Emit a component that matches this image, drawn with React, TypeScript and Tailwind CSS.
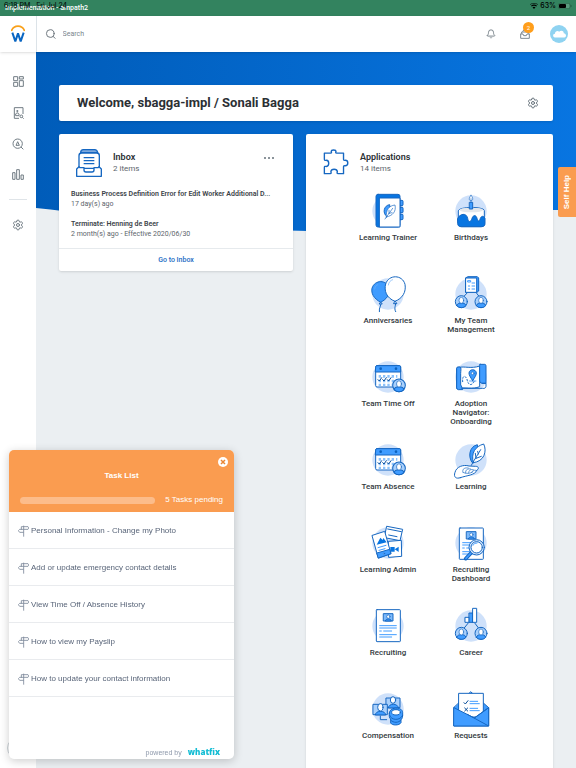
import type { ReactNode } from "react";
import { Search, Bell, Settings, ChevronRight } from "lucide-react";

const LINE = "#1667c1";
const FILL = "#409cff";
const PALE = "#cfe1fa";

function Art({ children, disc = true }: { children: ReactNode; disc?: boolean }) {
  return (
    <svg
      viewBox="0 0 108 108"
      className="size-9 shrink-0 overflow-visible"
      fill="white"
      stroke={LINE}
      strokeWidth="3"
      strokeLinejoin="round"
      strokeLinecap="round"
      aria-hidden="true"
    >
      {disc && <circle cx="54" cy="54" r="47" fill={PALE} stroke="none" />}
      {children}
    </svg>
  );
}

function Person({ x, y, r = 18 }: { x: number; y: number; r?: number }) {
  return (
    <g transform={`translate(${x} ${y}) scale(${r / 18})`}>
      <circle r="18" fill="#a9d0fc" />
      <path d="M-14 12C-12 5-6 4 0 4S12 5 14 12C7 20-7 20-14 12Z" fill={FILL} />
      <ellipse cy="-4" rx="7" ry="9" strokeWidth="2" />
    </g>
  );
}

function Portrait({ x, y }: { x: number; y: number }) {
  return (
    <g transform={`translate(${x} ${y})`}>
      <rect width="28" height="22" fill="#7dbafc" />
      <path d="M5 21C6 14 22 14 23 21Z" fill={FILL} />
      <circle cx="14" cy="9" r="5" strokeWidth="2" />
    </g>
  );
}

function NotebookArt() {
  return (
    <Art>
      <rect x="86" y="22" width="13" height="16" rx="3" fill={FILL} />
      <rect x="86" y="43" width="13" height="16" rx="3" fill={FILL} />
      <rect x="86" y="64" width="13" height="16" rx="3" fill={FILL} />
      <rect x="18" y="4" width="72" height="98" rx="6" fill="#0875e1" />
      <path d="M29 15H90V102H29Z" />
      <path d="M50 70C36 60 42 37 59 35L61 57Z" fill={FILL} />
      <path d="M49 72C47 51 57 38 75 36C79 55 69 68 49 72ZM45 78L68 46M57 61V52M57 61L66 59" strokeWidth="2" />
    </Art>
  );
}

function CakeArt() {
  return (
    <Art>
      <path d="M16 53C16 40 94 40 94 53V91C94 97 90 101 84 101H26C20 101 16 97 16 91Z" />
      <ellipse cx="55" cy="51" rx="35" ry="7" fill="#e4e7eb" stroke="none" />
      <path d="M14 76C21 62 40 58 44 76C46 89 53 89 57 76C61 65 69 65 72 76C76 90 80 83 82 76C85 69 91 67 96 76V92C96 98 92 101 86 101H24C18 101 14 98 14 92Z" fill="#0875e1" />
      <rect x="50" y="28" width="9" height="20" fill={FILL} />
      <path d="M54 7C62 15 60 23 54 23S46 16 54 7ZM54 17V27" strokeWidth="2" />
    </Art>
  );
}

function BalloonsArt() {
  return (
    <Art>
      <path d="M32 80C35 91 26 94 28 107M76 76C80 88 70 94 77 107" fill="none" />
      <path d="M32 79C10 67 3 51 6 37C14 10 51 10 58 38C61 56 48 71 32 79Z" fill={FILL} />
      <path d="M28 83L32 78L36 83Z" />
      <path d="M75 76C48 66 42 43 47 24C56-5 97-5 105 25C109 48 98 67 75 76Z" />
      <path d="M71 82L75 75L80 82Z" />
      <path d="M55 27C56 19 61 13 68 11M14 39C15 32 18 28 23 26" fill="none" strokeWidth="2" stroke="#70b0f8" />
    </Art>
  );
}

function TeamArt() {
  return (
    <Art>
      <path d="M45 48L33 61M68 48L78 61" fill="none" />
      <path d="M39 5L45 2H73L77 6V45L72 49H39Z" fill={FILL} />
      <rect x="39" y="6" width="32" height="43" />
      <path d="M45 14H53V18H45ZM46 30H50M46 39H50M57 21H65M57 30H65M57 39H65" stroke={FILL} />
      <Person x={25} y={77} />
      <Person x={84} y={77} />
    </Art>
  );
}

function CalendarArt() {
  return (
    <Art>
      <rect x="17" y="20" width="75" height="64" rx="4" />
      <path d="M17 24C17 21 19 20 21 20H88C91 20 92 22 92 24V39H17Z" fill={FILL} />
      <circle cx="32" cy="29" r="4" fill="#0b62bf" stroke="none" />
      <circle cx="78" cy="29" r="4" fill="#0b62bf" stroke="none" />
      <path d="M26 52H82M26 66H82M26 78H66" strokeWidth="8" strokeDasharray="7 6" strokeLinecap="butt" stroke="#8cc2fb" fill="none" />
      <path d="M24 62L28 66L35 56M38 62L42 66L49 56M52 62L56 66L63 56" fill="none" stroke="#064c99" />
      <Person x={87} y={79} r={19} />
    </Art>
  );
}

function MapArt() {
  return (
    <Art>
      <path d="M18 25C34 21 55 30 80 21V83C58 92 38 84 11 88V30C11 27 14 24 18 25Z" />
      <path d="M14 24H21C26 25 23 36 23 43V78C27 82 26 87 29 92H16C9 91 11 83 11 75V29Z" fill={FILL} />
      <path d="M81 16H95C99 16 99 20 99 24V73H88C80 73 80 65 80 60V22C80 19 79 17 81 16Z" fill={FILL} />
      <path d="M88 73H99V82C99 87 94 89 89 88H27" fill="none" />
      <ellipse cx="59" cy="66" rx="12" ry="4" fill="#a9d0fc" stroke="none" />
      <path d="M59 65C51 53 48 48 48 42C49 29 69 29 70 42C70 49 66 54 59 65Z" fill={FILL} />
      <circle cx="59" cy="43" r="4" strokeWidth="2" />
      <path d="M29 68C27 48 38 49 42 61C46 80 56 82 64 66" fill="none" strokeDasharray="4 6" />
    </Art>
  );
}

function HandLeafArt() {
  return (
    <Art>
      <path d="M57 61C45 45 48 14 73 8L78 43Z" fill={FILL} />
      <path d="M61 62C53 33 67 13 92 6C103 28 93 59 61 62Z" />
      <path d="M55 70C66 49 76 36 83 23M69 48L67 34M69 49L85 43M76 36L74 28" fill="none" />
      <path d="M22 107C9 112 1 105 6 91C10 74 31 67 48 72L68 73C78 73 78 81 72 84C66 100 42 100 22 107Z" />
      <path d="M30 91C26 80 36 76 46 78M38 93C36 82 46 79 53 81M47 93C47 84 54 81 61 83M56 91C57 86 63 83 70 85M30 91C38 96 53 95 60 89" fill="none" strokeWidth="2" />
    </Art>
  );
}

function MediaArt() {
  return (
    <Art>
      <path d="M51 4L98 13L90 47L44 38Z" />
      <path d="M53 12L94 20M56 30L81 35" fill="none" strokeWidth="3" />
      <path d="M56 49L94 46L95 94L57 97Z" />
      <path d="M61 66H74V80H61ZM74 73L86 65V81Z" fill="#0875e1" stroke="none" />
      <path d="M7 31L44 19L63 86L26 99Z" />
      <path d="M21 84L59 73L63 86L26 99Z" fill={FILL} />
      <path d="M20 59L31 38L38 45L40 39L50 52Z" fill="#0875e1" stroke="none" />
      <path d="M24 68L48 61M27 76L45 71" fill="none" stroke={FILL} />
      <circle cx="42" cy="86" r="2" strokeWidth="2" />
    </Art>
  );
}

function ResumeArt({ lens = false }: { lens?: boolean }) {
  return (
    <Art>
      <rect x="19" y={lens ? 9 : 5} width="72" height={lens ? 94 : 96} rx="2" />
      <Portrait x={41} y={lens ? 20 : 17} />
      <path d="M29 53H79M29 60H79M29 69H34M41 69H65M29 80H79M29 87H65" fill="none" stroke={FILL} />
      {lens && (
        <>
          <path d="M54 84L38 101" fill="none" strokeWidth="11" />
          <path d="M54 84L39 100" fill="none" stroke={FILL} strokeWidth="5" />
          <circle cx="71" cy="67" r="23" fill="#d9eaff" />
          <circle cx="71" cy="67" r="17" />
          <path d="M60 61C62 56 67 54 72 54" fill="none" stroke={FILL} />
        </>
      )}
    </Art>
  );
}

function CareerArt() {
  return (
    <Art>
      <path d="M45 46L32 62M66 46L78 62" fill="none" />
      <path d="M37 28H49V43H37Z" />
      <path d="M49 15H60V43H49Z" fill={FILL} />
      <path d="M60 1H71V43H60Z" />
      <Person x={25} y={76} />
      <Person x={84} y={76} />
    </Art>
  );
}

function CompensationArt() {
  return (
    <Art>
      <path d="M49 21H90V50H49Z" fill="#a9d0fc" />
      <path d="M55 50C56 36 84 36 85 50Z" fill={FILL} />
      <ellipse cx="69" cy="27" rx="8" ry="10" />
      <path d="M10 40H52V71H10Z" fill="#a9d0fc" />
      <path d="M16 71C17 57 46 57 47 71Z" fill={FILL} />
      <ellipse cx="31" cy="49" rx="8" ry="11" />
      <path d="M31 75V86H50" fill="none" />
      <path d="M58 67C58 46 98 46 98 65C99 78 96 84 93 86V95C88 104 66 104 62 96V84C58 81 57 75 58 67Z" fill={FILL} />
      <ellipse cx="78" cy="64" rx="13" ry="8" />
      <path d="M59 73C63 89 91 90 98 73M62 87C70 97 86 96 93 87" fill="none" />
    </Art>
  );
}

function EnvelopeArt() {
  return (
    <Art disc={false}>
      <path d="M54 3L107 50V105H3V50Z" fill={FILL} />
      <path d="M18 7H91V78H18Z" />
      <path d="M33 35L37 39L45 29M35 51L44 60M44 51L35 60" fill="none" stroke="#064c99" />
      <path d="M51 31H74M51 38H79M51 52H74M51 59H79" fill="none" stroke={FILL} />
      <path d="M3 50L64 81L107 50V105H3Z" fill={FILL} />
      <path d="M43 70L105 104M64 81L107 50" fill="none" />
    </Art>
  );
}

const apps: { label: string; art: ReactNode }[] = [
  { label: "Learning Trainer", art: <NotebookArt /> },
  { label: "Birthdays", art: <CakeArt /> },
  { label: "Anniversaries", art: <BalloonsArt /> },
  { label: "My Team Management", art: <TeamArt /> },
  { label: "Team Time Off", art: <CalendarArt /> },
  { label: "Adoption Navigator: Onboarding", art: <MapArt /> },
  { label: "Team Absence", art: <CalendarArt /> },
  { label: "Learning", art: <HandLeafArt /> },
  { label: "Learning Admin", art: <MediaArt /> },
  { label: "Recruiting Dashboard", art: <ResumeArt lens /> },
  { label: "Recruiting", art: <ResumeArt /> },
  { label: "Career", art: <CareerArt /> },
  { label: "Compensation", art: <CompensationArt /> },
  { label: "Requests", art: <EnvelopeArt /> },
];

const tasks = [
  "Personal Information - Change my Photo",
  "Add or update emergency contact details",
  "View Time Off / Absence History",
  "How to view my Payslip",
  "How to update your contact information",
];

function StatusBar() {
  return (
    <div className="relative flex h-4 shrink-0 items-center justify-between bg-[#33835f] pr-1 pl-[5px]">
      <span className="text-[7px] leading-4 font-medium text-white">Implementation - ampath2</span>
      <div className="absolute top-0 left-1 flex gap-1.5 font-['Inter','Liberation_Sans',sans-serif] text-[7px] leading-3 text-black">
        <span>6:18 PM</span>
        <span>Fri Jul 24</span>
      </div>
      <div className="flex items-center gap-0.5 pb-1 font-['Inter','Liberation_Sans',sans-serif] text-[7px] leading-3 font-medium text-black">
        <svg viewBox="0 0 24 18" className="h-[6px] w-2" aria-hidden="true">
          <path d="M12 18L7.5 13C10 11 14 11 16.500 13ZM5 10.500C9 7 15 7 19 10.500L21 8C16 3.500 8 3.500 3 8ZM1 5.500L0 4C7-1.500 17-1.500 24 4L22.500 5.500C16 0 8 0 1 5.500Z" />
        </svg>
        <span>63%</span>
        <svg viewBox="0 0 42 18" className="h-[6px] w-3.5" aria-hidden="true">
          <rect x="1" y="1" width="35" height="16" rx="5" fill="#5b9c7f" stroke="#245e44" strokeWidth="2" />
          <rect x="3" y="3" width="21" height="12" rx="3" />
          <path d="M39 6V12" stroke="#245e44" strokeWidth="3" />
        </svg>
      </div>
    </div>
  );
}

function Header() {
  return (
    <header className="relative z-10 flex h-9 shrink-0 items-center bg-white shadow-sm">
      <a href="#home" aria-label="Home" className="flex h-full w-[37px] items-center justify-center border-r border-[#dce3e8]">
        <svg viewBox="0 0 42 54" className="h-[18px] w-3.5" fill="none" aria-hidden="true">
          <path d="M2 16C9-1 33-1 40 16" stroke="#f9a11b" strokeWidth="5" strokeLinecap="round" />
          <path d="M4 23L13 49L21 25L29 49L38 23" stroke="#0a66c2" strokeWidth="6" strokeLinejoin="bevel" />
        </svg>
      </a>
      <label className="flex flex-1 items-center gap-1.5 pl-2 text-[#6b747b]">
        <Search className="size-3" strokeWidth={2} />
        <input
          type="search"
          placeholder="Search"
          aria-label="Search"
          className="w-full bg-transparent text-[7px] leading-3 outline-none placeholder:text-[#7b858c] placeholder:opacity-100"
        />
      </label>
      <div className="flex items-center pr-2 text-[#65717a]">
        <button aria-label="Notifications" className="mr-6">
          <Bell className="size-[10px]" strokeWidth={2} />
        </button>
        <button aria-label="Inbox, 2 unread" className="relative mr-5">
          <svg viewBox="0 0 30 30" className="size-[10px]" fill="none" stroke="currentColor" strokeWidth="2.500" aria-hidden="true">
            <path d="M2 14V28H28V14M2 15H9L11 20H19L21 15H28M5 14V9H25V14M8 8L11 3H19L22 8" />
          </svg>
          <span className="absolute -top-[7px] left-[3px] flex size-[11px] items-center justify-center rounded-full bg-[#ff9e1b] text-[6px] leading-none text-white">
            2
          </span>
        </button>
        <button aria-label="Profile" className="flex size-[18px] items-center justify-center rounded-full bg-[#8fd3f1]">
          <svg viewBox="0 0 40 24" className="h-2 w-[13px]" fill="white" aria-hidden="true">
            <path d="M6 23C-2 21-1 11 6 11C6 3 15 1 19 5C24-1 34 2 33 10C42 11 42 22 35 23Z" />
          </svg>
        </button>
      </div>
    </header>
  );
}

function Sidebar() {
  return (
    <nav aria-label="Main" className="flex w-9 shrink-0 flex-col items-center bg-white pt-6 pb-[9px] text-[#717c84]">
      <button aria-label="Dashboard">
        <svg viewBox="0 0 33 33" className="size-[11px]" fill="none" stroke="currentColor" strokeWidth="3" aria-hidden="true">
          <path d="M2 2H14V14H2ZM19 2H31V9H19ZM19 14H31V31H19ZM2 19H14V31H2Z" />
        </svg>
      </button>
      <button aria-label="Directory" className="mt-5">
        <svg viewBox="0 0 33 36" className="h-3 w-[11px]" fill="none" stroke="currentColor" strokeWidth="3" aria-hidden="true">
          <path d="M18 34H4V2H30V21M8 26V21C9 17 17 17 18 21V26ZM13 9V16M10 12H16" />
          <circle cx="25" cy="28" r="4" />
          <path d="M28 31L32 35" />
        </svg>
      </button>
      <button aria-label="Find people" className="mt-[19px]">
        <svg viewBox="0 0 36 36" className="size-3" fill="none" stroke="currentColor" strokeWidth="3" aria-hidden="true">
          <circle cx="17" cy="17" r="14" />
          <path d="M27 27L34 34M12 22L17 11L22 22Z" />
        </svg>
      </button>
      <button aria-label="Reports" className="mt-[19px]">
        <svg viewBox="0 0 36 33" className="h-[11px] w-3" fill="none" stroke="currentColor" strokeWidth="3" aria-hidden="true">
          <path d="M2 11H9V31H2ZM14 2H22V31H14ZM27 18H34V31H27Z" />
        </svg>
      </button>
      <hr className="mt-[19px] w-[18px] border-[#dfe4e8]" />
      <button aria-label="Settings" className="mt-[19px]">
        <Settings className="size-3" strokeWidth={2} />
      </button>
      <button aria-label="Expand menu" className="mt-auto flex size-[22px] items-center justify-center rounded-full border border-[#ccd3d8]">
        <ChevronRight className="size-[10px]" />
      </button>
    </nav>
  );
}

function InboxCard() {
  return (
    <section aria-label="Inbox" className="flex-[234] self-start rounded-xs bg-white shadow-sm">
      <div className="flex items-start px-[17px] pt-[15px]">
        <svg viewBox="0 0 78 84" className="h-7 w-[26px] shrink-0" fill="white" stroke={LINE} strokeWidth="4" strokeLinejoin="round" aria-hidden="true">
          <path d="M14 11C14 4 17 2 22 2H56C61 2 64 5 65 11Z" fill="#7ea9dc" />
          <path d="M9 20C9 15 12 12 17 12H62C67 12 70 15 70 20V58H9Z" />
          <path d="M23 26H55M23 35H55M23 44H55" />
          <path d="M9 53L2 60V82H76V60L69 53L66 56H54V63C54 66 52 69 48 69H30C26 69 24 66 24 63V56H12Z" />
        </svg>
        <div className="ml-[11px] flex-1 pt-[3px]">
          <h2 className="text-[9px] leading-[11px] font-semibold text-[#2c3034]">Inbox</h2>
          <p className="text-[8px] leading-3 text-[#5c656b]">2 items</p>
        </div>
        <button aria-label="Inbox options" className="mt-2 mr-0.5 flex gap-0.5">
          <span className="size-[2px] rounded-full bg-[#657079]" />
          <span className="size-[2px] rounded-full bg-[#657079]" />
          <span className="size-[2px] rounded-full bg-[#657079]" />
        </button>
      </div>
      <ul className="flex flex-col gap-[10px] px-3 pt-3 pb-[9px] text-[7px] leading-[10px] text-[#5c656b]">
        <li>
          <p className="font-semibold whitespace-nowrap text-[#3c4349]">Business Process Definition Error for Edit Worker Additional D...</p>
          <p>17 day(s) ago</p>
        </li>
        <li>
          <p className="font-semibold text-[#3c4349]">Terminate: Henning de Beer</p>
          <p>2 month(s) ago - Effective 2020/06/30</p>
        </li>
      </ul>
      <a href="#inbox" className="block border-t border-[#e6eaed] text-center text-[7px] leading-[22px] font-medium text-[#1b6bc4]">
        Go to Inbox
      </a>
    </section>
  );
}

function ApplicationsCard() {
  return (
    <section aria-label="Applications" className="flex-[247] rounded-t-xs bg-white shadow-sm">
      <div className="flex items-start px-[17px] pt-[15px]">
        <svg viewBox="0 0 76 76" className="size-[26px] shrink-0" fill="none" stroke={LINE} strokeWidth="4" strokeLinejoin="round" aria-hidden="true">
          <path d="M4 12H22C27 12 24 9 24 8C24 1 38 1 38 8C38 9 35 12 40 12H60V30C60 34 63 33 65 33C75 33 75 49 65 49C63 49 60 48 60 52V72H44C39 72 42 68 42 66C41 57 24 57 23 66C23 68 26 72 21 72H4V54C4 49 8 51 10 51C19 50 19 34 10 33C8 33 4 35 4 30Z" />
        </svg>
        <div className="ml-[11px] flex-1 pt-[3px]">
          <h2 className="text-[9px] leading-[11px] font-semibold text-[#2c3034]">Applications</h2>
          <p className="text-[8px] leading-3 text-[#5c656b]">14 items</p>
        </div>
      </div>
      <div className="grid auto-rows-[83px] grid-cols-[83px_83px] justify-center pt-[18px]">
        {apps.map((app) => (
          <a key={app.label} href="#app" className="flex flex-col items-center gap-1 px-3 text-center text-[8px] leading-[9px] font-medium text-[#333a40]">
            {app.art}
            <span className={app.label.length > 16 ? "" : "whitespace-nowrap"}>{app.label}</span>
          </a>
        ))}
      </div>
    </section>
  );
}

function Signpost() {
  return (
    <svg viewBox="0 0 33 36" className="h-3 w-[11px] shrink-0" fill="none" stroke="#7b8799" strokeWidth="2.500" strokeLinejoin="round" aria-hidden="true">
      <path d="M17 2V35M10 14V5H30L33 9L30 13H17M17 13H5L1 17L5 22H17" />
    </svg>
  );
}

function TaskPanel() {
  return (
    <aside
      aria-label="Task List"
      className="fixed bottom-[9px] left-[9px] z-20 flex h-[309px] w-[225px] flex-col overflow-hidden rounded-[5px] bg-white font-['Liberation_Sans',Arial,sans-serif] text-[8px] shadow-[0_2px_10px_rgba(0,0,0,0.2)]"
    >
      <div className="relative shrink-0 bg-[#fa9c50] px-[11px] pt-5 pb-1.5 text-white">
        <button aria-label="Close" className="absolute top-[7px] right-[6px] flex size-[10px] items-center justify-center rounded-full bg-white">
          <svg viewBox="0 0 12 12" className="size-[6px]" stroke="#e98735" strokeWidth="3" aria-hidden="true">
            <path d="M2 2L10 10M10 2L2 10" />
          </svg>
        </button>
        <h2 className="text-center leading-3 font-bold">Task List</h2>
        <div className="mt-3 flex items-center justify-between leading-3">
          <div role="progressbar" aria-valuenow={0} aria-label="Tasks done" className="h-[7px] w-[135px] rounded-full bg-[#fcbc8a]" />
          <span>5 Tasks pending</span>
        </div>
      </div>
      <ul>
        {tasks.map((task) => (
          <li key={task} className="border-b border-[#e9ebee]">
            <a href="#task" className="flex h-9 items-center gap-0.5 pt-px pl-[9px] text-[#596579]">
              <Signpost />
              {task}
            </a>
          </li>
        ))}
      </ul>
      <p className="mt-auto flex items-baseline justify-end gap-1.5 pr-3.5 text-[7px] leading-3 text-[#8e99ab]">
        powered by
        <span className="font-['Open_Sans',sans-serif] text-[8px] font-extrabold text-[#14bdd4]">whatfix</span>
      </p>
    </aside>
  );
}

export default function App() {
  return (
    <div className="flex h-screen flex-col overflow-hidden bg-[#ebeff2] font-['Roboto','Liberation_Sans',sans-serif]">
      <StatusBar />
      <Header />
      <div className="flex min-h-0 flex-1">
        <Sidebar />
        <main className="relative flex min-w-0 flex-1 flex-col px-[23px] pt-[33px]">
          <svg viewBox="0 0 540 180" preserveAspectRatio="none" className="absolute top-0 left-0 h-[180px] w-full" aria-hidden="true">
            <defs>
              <linearGradient id="banner" x1="0" x2="1" y1="0" y2="0">
                <stop offset="0" stopColor="#005cb9" />
                <stop offset="1" stopColor="#0875e1" />
              </linearGradient>
            </defs>
            <path d="M0 0H540V158H515C440 168 390 179 290 179C180 179 100 167 0 156Z" fill="url(#banner)" />
          </svg>
          <div className="relative flex h-9 shrink-0 items-center justify-between rounded-xs bg-white pr-3.5 pl-[18px] shadow-sm">
            <h1 className="text-[13px] leading-4 font-bold text-[#2c3034]">Welcome, sbagga-impl / Sonali Bagga</h1>
            <button aria-label="Page settings" className="text-[#65717a]">
              <Settings className="size-3" strokeWidth={2} />
            </button>
          </div>
          <div className="relative mt-[13px] flex flex-1 gap-[13px]">
            <InboxCard />
            <ApplicationsCard />
          </div>
        </main>
      </div>
      <TaskPanel />
      <button className="fixed top-[167px] right-0 z-20 flex h-[50px] w-[18px] items-center justify-center rounded-l-xs bg-[#fa9c50] font-['Liberation_Sans',Arial,sans-serif] text-[8px] font-bold text-white">
        <span className="rotate-180 leading-none [writing-mode:vertical-rl]">Self Help</span>
      </button>
    </div>
  );
}
